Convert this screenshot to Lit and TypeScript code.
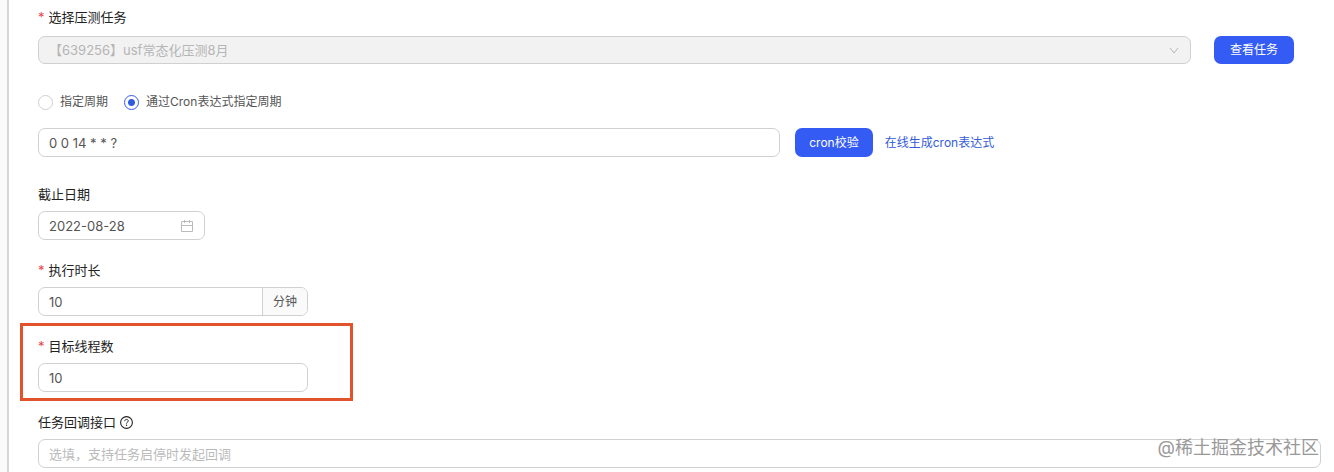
import { LitElement, html, css, svg } from "lit";
import { customElement, state } from "lit/decorators.js";

const chevron = svg`<path d="M1 2l4 5 4-5" fill="none" stroke="currentColor" stroke-width="1"/>`;

@customElement("app-root")
export class AppRoot extends LitElement {
  static styles = css`
    :host {
      display: block;
      font-family: Inter, "Noto Sans CJK SC", sans-serif;
      font-size: 13px;
      line-height: 20px;
      color: #555;
    }
    *,
    *::after {
      box-sizing: border-box;
    }
    .page {
      min-height: 100vh;
      padding-left: 7px;
      background: #fafafa;
    }
    .panel {
      min-height: 100vh;
      padding: 7px 13px 4px 29px;
      border-left: 2px solid #d6d6d6;
      background: #fff;
    }
    form {
      display: flex;
      flex-direction: column;
      gap: 20px;
    }
    .group {
      display: flex;
      flex-direction: column;
      gap: 7px;
    }
    .task {
      gap: 9px;
    }
    .schedule {
      gap: 16px;
      padding: 8px 0 7px;
      margin: 0;
      border: 0;
      min-width: 0;
    }
    .label {
      display: flex;
      align-items: center;
      gap: 4px;
      color: #222;
    }
    .required {
      color: #e5484d;
    }
    .task-row {
      display: grid;
      grid-template-columns: minmax(0, 1fr) 107px;
      gap: 23px;
    }
    .cron-row {
      display: grid;
      grid-template-columns: minmax(0, 24fr) minmax(0, 17fr);
      gap: 15px;
    }
    .actions {
      display: flex;
      align-items: center;
      gap: 12px;
    }
    .field {
      display: flex;
      align-items: center;
      width: 100%;
      height: 29px;
      border: 1px solid #d0d0d0;
      border-radius: 7px;
      background: #fff;
      overflow: hidden;
    }
    .field:focus-within {
      border-color: #345bf3;
    }
    .disabled {
      height: 28px;
      background: #f2f2f2;
      color: #b5b5b5;
      padding-right: 11px;
    }
    input[type="text"],
    select {
      appearance: none;
      flex: 1;
      min-width: 0;
      height: 100%;
      margin: 0;
      padding: 0 10px;
      border: 0;
      outline: 0;
      background: none;
      font: inherit;
      color: #555;
    }
    select:disabled {
      color: #b5b5b5;
      opacity: 1;
    }
    input::placeholder {
      color: #bbb;
      opacity: 1;
    }
    .date {
      width: 167px;
      padding-right: 11px;
      color: #bbb;
    }
    .short {
      width: 270px;
    }
    .unit {
      display: flex;
      align-items: center;
      height: 100%;
      padding: 0 10px;
      border-left: 1px solid #d0d0d0;
      background: #fafafa;
      font-size: 12px;
    }
    button {
      height: 28px;
      padding: 0 16px;
      border: 0;
      border-radius: 7px;
      background: #345bf3;
      color: #fff;
      font: inherit;
      font-size: 12px;
      justify-self: start;
      white-space: nowrap;
      cursor: pointer;
    }
    .actions button {
      height: 29px;
      padding: 0 14px;
    }
    a {
      color: #345bd8;
      font-size: 12px;
      text-decoration: none;
    }
    .radios {
      display: flex;
      gap: 16px;
      font-size: 12px;
    }
    .radios label {
      display: flex;
      align-items: center;
      gap: 7px;
    }
    input[type="radio"] {
      appearance: none;
      width: 15px;
      height: 15px;
      margin: 0;
      border: 1px solid #d0d0d0;
      border-radius: 50%;
      background: #fff;
    }
    input[type="radio"]:checked {
      border-color: #345bf3;
      background: radial-gradient(circle, #2f5be0 3px, #fff 4px);
    }
    .marked {
      position: relative;
    }
    .marked::after {
      content: "";
      position: absolute;
      top: -13px;
      left: -18px;
      width: 333px;
      height: 78px;
      border: 3px solid #e2532c;
      pointer-events: none;
    }
    .callback {
      position: relative;
    }
    .watermark {
      position: absolute;
      right: 2px;
      bottom: 7px;
      color: #999;
      font-size: 18px;
      line-height: 26px;
      pointer-events: none;
    }
    svg {
      display: block;
      flex: none;
    }
  `;

  @state() private mode = "cron";

  private radio(value: string, text: string) {
    return html`<label>
      <input
        type="radio"
        name="mode"
        value=${value}
        .checked=${this.mode === value}
        @change=${() => (this.mode = value)}
      />${text}
    </label>`;
  }

  private required(id: string, text: string) {
    return html`<label class="label" for=${id}><span class="required">*</span>${text}</label>`;
  }

  render() {
    return html`
      <div class="page">
        <main class="panel">
          <form @submit=${(e: Event) => e.preventDefault()}>
            <div class="group task">
              ${this.required("task", "选择压测任务")}
              <div class="task-row">
                <div class="field disabled">
                  <select id="task" disabled>
                    <option>【639256】usf常态化压测8月</option>
                  </select>
                  <svg width="10" height="9" viewBox="0 0 10 9" aria-hidden="true">${chevron}</svg>
                </div>
                <button type="button">查看任务</button>
              </div>
            </div>

            <fieldset class="group schedule" aria-label="周期">
              <div class="radios">
                ${this.radio("period", "指定周期")} ${this.radio("cron", "通过Cron表达式指定周期")}
              </div>
              <div class="cron-row">
                <div class="field">
                  <input type="text" aria-label="Cron表达式" value="0 0 14 * * ?" />
                </div>
                <div class="actions">
                  <button type="button">cron校验</button>
                  <a href="#">在线生成cron表达式</a>
                </div>
              </div>
            </fieldset>

            <div class="group">
              <label class="label" for="deadline">截止日期</label>
              <div class="field date">
                <input type="text" id="deadline" value="2022-08-28" />
                <svg width="12" height="12" viewBox="0 0 12 12" fill="none" stroke="currentColor" aria-hidden="true">
                  <path d="M.5 1.5h11v10H.5zM.5 5.5h11M3.5 0v3M8.5 0v3" />
                </svg>
              </div>
            </div>

            <div class="group">
              ${this.required("duration", "执行时长")}
              <div class="field short">
                <input type="text" id="duration" inputmode="numeric" value="10" />
                <span class="unit">分钟</span>
              </div>
            </div>

            <div class="group marked">
              ${this.required("threads", "目标线程数")}
              <div class="field short">
                <input type="text" id="threads" inputmode="numeric" value="10" />
              </div>
            </div>

            <div class="group callback">
              <label class="label" for="callback">
                任务回调接口
                <svg width="13" height="13" viewBox="0 0 13 13" fill="none" stroke="currentColor" aria-hidden="true">
                  <circle cx="6.5" cy="6.5" r="5.9" stroke-width="1.1" />
                  <path d="M4.7 5.2c0-1.1.8-1.8 1.8-1.8s1.8.7 1.8 1.6c0 1.2-1.8 1.2-1.8 2.6" />
                  <circle cx="6.5" cy="9.3" r=".7" fill="currentColor" stroke="none" />
                </svg>
              </label>
              <div class="field">
                <input type="text" id="callback" placeholder="选填，支持任务启停时发起回调" />
              </div>
              <span class="watermark">@稀土掘金技术社区</span>
            </div>
          </form>
        </main>
      </div>
    `;
  }
}
